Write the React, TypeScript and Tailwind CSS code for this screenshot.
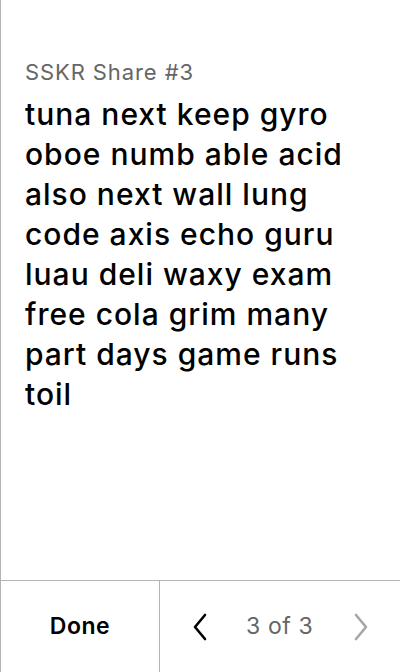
import React from "react";

export default function App() {
  const words =
    "tuna next keep gyro oboe numb able acid also next wall lung code axis echo guru luau deli waxy exam free cola grim many part days game runs toil";
  return (
    <div
      className="w-[400px] h-[672px] flex flex-col bg-white border-l border-[#b3b3b3] text-black"
      style={{ fontFamily: "Inter, 'Noto Sans', sans-serif" }}
    >
      <div className="flex-1 pl-[24px] pr-[30px] pt-[57px]">
        <div className="text-[22px] leading-[30px] tracking-[0.9px] text-[#666666]">SSKR Share #3</div>
        <div className="mt-[7px] text-[30px] leading-[40px] tracking-[1px] font-medium">{words}</div>
      </div>
      <div className="h-[92px] border-t border-[#b3b3b3] flex">
        <div className="w-[159px] border-r border-[#b3b3b3] flex items-center justify-center">
          <span className="text-[23px] font-semibold tracking-[0.5px]">Done</span>
        </div>
        <div className="flex-1 flex items-center">
          <svg width="18" height="28" viewBox="0 0 18 28" className="ml-[31px]">
            <path d="M14 2 L4 14 L14 26" fill="none" stroke="#000" strokeWidth="2.6" strokeLinecap="round" strokeLinejoin="round" />
          </svg>
          <span className="ml-[37px] text-[23px] tracking-[0.6px] text-[#666666]">3 of 3</span>
          <svg width="18" height="28" viewBox="0 0 18 28" className="ml-[39px]">
            <path d="M4 2 L14 14 L4 26" fill="none" stroke="#a6a6a6" strokeWidth="2.6" strokeLinecap="round" strokeLinejoin="round" />
          </svg>
        </div>
      </div>
    </div>
  );
}
